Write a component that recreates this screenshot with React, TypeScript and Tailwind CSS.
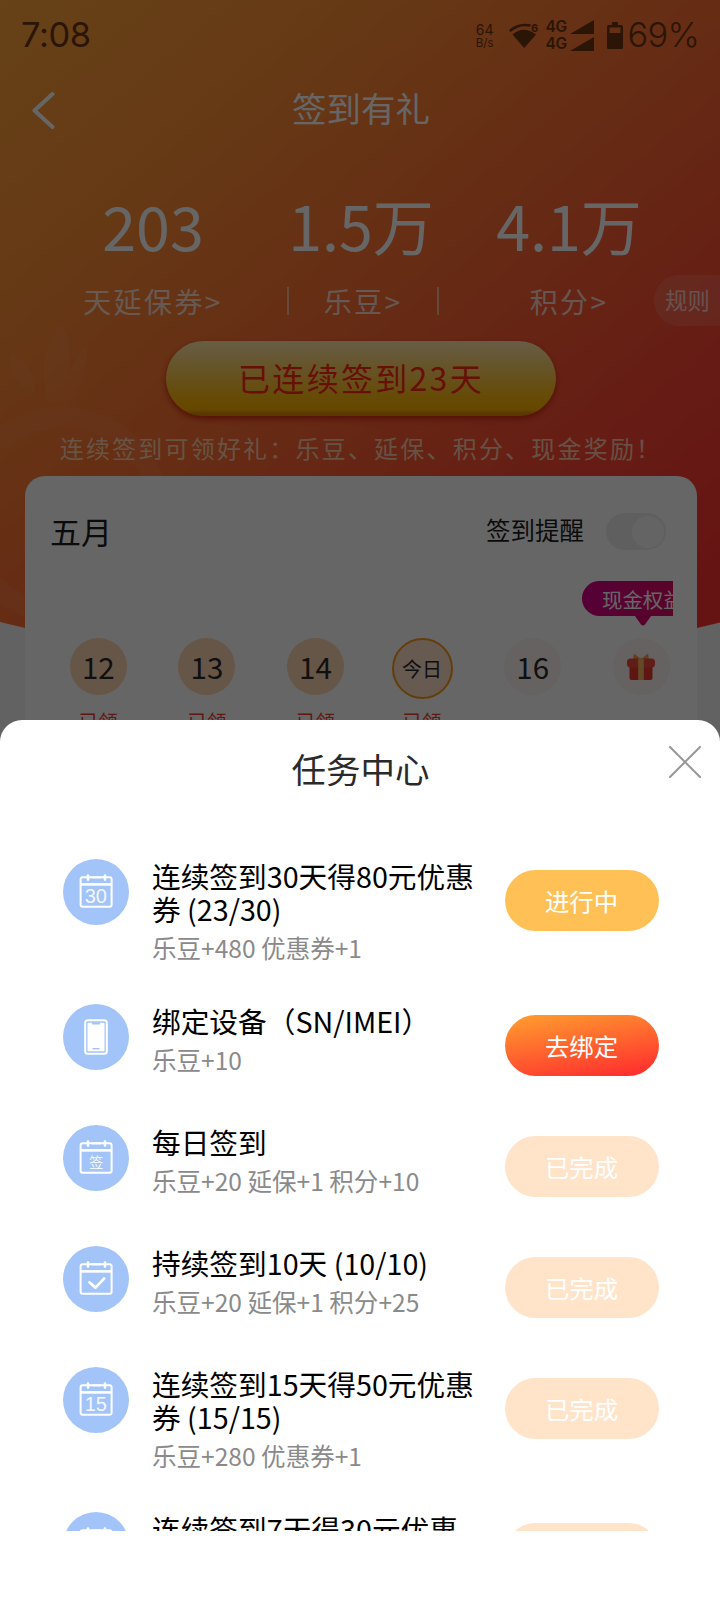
import React from "react";

type IconKind = "30" | "15" | "7" | "签" | "check" | "phone";
type Status = "doing" | "go" | "done";

interface Task {
  icon: IconKind;
  title: string;
  reward: string;
  status: Status;
  tall?: boolean;
}

const tasks: Task[] = [
  { icon: "30", title: "连续签到30天得80元优惠券 (23/30)", reward: "乐豆+480 优惠券+1", status: "doing", tall: true },
  { icon: "phone", title: "绑定设备（SN/IMEI）", reward: "乐豆+10", status: "go" },
  { icon: "签", title: "每日签到", reward: "乐豆+20 延保+1 积分+10", status: "done" },
  { icon: "check", title: "持续签到10天 (10/10)", reward: "乐豆+20 延保+1 积分+25", status: "done" },
  { icon: "15", title: "连续签到15天得50元优惠券 (15/15)", reward: "乐豆+280 优惠券+1", status: "done", tall: true },
  { icon: "7", title: "连续签到7天得30元优惠", reward: "", status: "done", tall: true },
];

const statusLabel: Record<Status, string> = { doing: "进行中", go: "去绑定", done: "已完成" };
const statusClass: Record<Status, string> = {
  doing: "bg-[#ffc156]",
  go: "bg-[linear-gradient(170deg,#ff9a2e_5%,#ff2e2e_95%)]",
  done: "bg-[#ffe4ca]",
};

function TaskIcon({ kind }: { kind: IconKind }) {
  return (
    <svg viewBox="0 0 66 66" className="block size-[66px] shrink-0" fill="none">
      <circle cx="33" cy="33" r="33" fill="#a2c4f8" />
      {kind === "phone" ? (
        <>
          <rect x="22.2" y="16.2" width="21.6" height="33.6" rx="2.5" stroke="#fff" strokeWidth="2" />
          <rect x="24.5" y="18.8" width="17" height="28.4" rx="1" fill="#fff" />
          <path d="M28.5 18.6h9l-1 2h-7z" fill="#a2c4f8" />
          <path d="M29.5 44.7h7" stroke="#a2c4f8" strokeWidth="1.4" />
        </>
      ) : (
        <>
          <rect x="17.6" y="18.2" width="31" height="29.6" rx="2" stroke="#fff" strokeWidth="2" />
          <path d="M17 25.4h32" stroke="#fff" strokeWidth="2.6" />
          <path d="M25 16.6v4M42 16.6v4" stroke="#fff" strokeWidth="2.6" strokeLinecap="round" />
          <path d="M29 18.4h9" stroke="#fff" strokeWidth="2" />
          {kind === "check" ? (
            <path d="M26.5 36.2l6 5.4 8.6-9" stroke="#fff" strokeWidth="2.8" strokeLinecap="round" strokeLinejoin="round" />
          ) : kind === "签" ? (
            <text x="33.3" y="42.8" fontSize="14.5" textAnchor="middle" fill="#fff" className="font-['Noto_Sans_CJK_SC',sans-serif] font-[350]">
              签
            </text>
          ) : (
            <text x="32.8" y="43.6" fontSize="20" textAnchor="middle" fill="#fff" fillOpacity=".9" className="font-['Liberation_Sans',sans-serif]">
              {kind}
            </text>
          )}
        </>
      )}
    </svg>
  );
}

function StatusBar() {
  return (
    <header className="flex h-[71px] items-center justify-between pr-[21px] pl-[21px] font-['Inter',sans-serif] text-[#2b1506]">
      <span className="text-[34.5px] leading-none tracking-[-0.4px]">7:08</span>
      <div className="flex items-center">
        <div className="mr-[14px] flex flex-col items-center text-[14px] leading-[15px]">
          <span>64</span>
          <span className="text-[11.5px] leading-[13px]">B/s</span>
        </div>
        <svg viewBox="0 0 32 28" className="mr-[6px] h-[28px] w-[32px]" fill="none">
          <path d="M1.8 9Q11 1 22.5 3.6" stroke="currentColor" strokeWidth="2.6" />
          <path d="M4.5 12.5Q15.5 3 28 12.5L16.2 26Z" fill="currentColor" />
          <text x="23" y="10" fontSize="11" fontWeight="700" fill="currentColor" className="font-['Inter',sans-serif]">
            6
          </text>
        </svg>
        <div className="mr-[13px] flex flex-col">
          {[0, 1].map((i) => (
            <div key={i} className="flex h-[17px] items-center gap-[2px]">
              <span className="w-[22px] text-[15.5px] leading-none font-semibold tracking-[-0.5px]">4G</span>
              <svg viewBox="0 0 24 14" className="h-[14px] w-6">
                <path d="M0 14L24 0V14Z" fill="currentColor" />
              </svg>
            </div>
          ))}
        </div>
        <svg viewBox="0 0 16 27" className="mr-[5px] h-[27px] w-4" fill="currentColor">
          <path fillRule="evenodd" d="M5 0h6v3h3.5q1.5 0 1.5 1.5v21q0 1.5-1.5 1.5h-13Q0 27 0 25.5v-21Q0 3 1.5 3H5zM2.5 5.5v5.5h11V5.5z" />
        </svg>
        <span className="text-[34.5px] leading-none font-light tracking-[-0.8px]">69%</span>
      </div>
    </header>
  );
}

function Gift() {
  return (
    <svg viewBox="0 0 30 30" className="size-[30px]">
      <path d="M15 7L8 1.500l-1 6zM15 7l7-5.500 1 6z" fill="#f5a04a" />
      <rect x="3.5" y="12" width="23" height="16" rx="2" fill="#e8382e" />
      <rect x="1" y="6.5" width="28" height="9" rx="3.5" fill="#f24a3a" />
      <rect x="12.2" y="6.5" width="5.6" height="21.5" fill="#f5b860" />
    </svg>
  );
}

const stats = [
  { value: "203", label: "天延保券>" },
  { value: "1.5万", label: "乐豆>" },
  { value: "4.1万", label: "积分>" },
];

const days = [
  { text: "12", kind: "past" },
  { text: "13", kind: "past" },
  { text: "14", kind: "past" },
  { text: "今日", kind: "today" },
  { text: "16", kind: "next" },
  { text: "", kind: "gift" },
];

function DayCell({ text, kind }: { text: string; kind: string }) {
  const tone =
    kind === "past"
      ? "size-[57px] bg-[#ffd6b4] text-[29.5px]"
      : kind === "today"
        ? "size-[61px] border-2 border-[#f79a1e] bg-[#ffe0ca] text-[20px]"
        : "size-[57px] bg-[#fcf6f2] text-[29.5px]";
  return (
    <div className={`flex w-[108.6px] shrink-0 flex-col items-center ${kind === "today" ? "pr-[4px]" : ""}`}>
      <div className="flex h-[72px] items-start">
        <div className={`flex items-center justify-center rounded-full leading-none text-[#2a2a2a] ${tone}`}>
          {kind === "gift" ? <Gift /> : text}
        </div>
      </div>
      {(kind === "past" || kind === "today") && <span className="text-[19.5px] leading-[22px] text-[#f0402f]">已领</span>}
    </div>
  );
}

function CheckInPage() {
  return (
    <main className="h-[1600px] w-[720px] overflow-hidden bg-[#f4f4f4] [grid-area:1/1]">
      <div className="grid">
        <div className="z-0 h-[700px] bg-[linear-gradient(140deg,#ffa53c_0%,#ff9136_22%,#ff6f34_47%,#ff4a34_71%,#ff3030_92%)] [clip-path:polygon(0_0,100%_0,100%_622px,697px_628px,50%_680px,25px_628px,0_622px)] [grid-area:1/1]">
          <svg viewBox="0 0 720 700" className="block h-[700px] w-[720px]" fill="none">
            <circle cx="62" cy="515" r="98" stroke="#ff9060" strokeOpacity=".22" strokeWidth="20" />
            <path d="M48 402Q34 360 62 322Q74 350 68 390Q72 355 86 346Q90 380 66 402Z" fill="#ff9a60" fillOpacity=".22" />
            <path d="M36 394Q4 380 10 352Q32 362 36 394Z" fill="#ff9a60" fillOpacity=".18" />
          </svg>
        </div>
        <div className="z-[1] flex flex-col pt-[70px] [grid-area:1/1]">
          <div className="grid h-[74px] grid-cols-[88px_1fr_88px] items-center">
            <svg viewBox="0 0 24 40" className="mt-[6px] ml-[31px] h-10 w-6" fill="none">
              <path d="M21.5 4L3.5 20.5L21.5 37" stroke="#fff" strokeWidth="4" strokeLinecap="round" strokeLinejoin="round" />
            </svg>
            <h1 className="text-center text-[34.5px] leading-[40px] text-white">签到有礼</h1>
          </div>
          <div className="mt-[48px] grid grid-cols-3 px-[49px] text-center text-white">
            {stats.map((s, i) => (
              <div key={s.label} className="flex flex-col items-center">
                <span className="pt-px text-[61px] leading-[64px]">{s.value}</span>
                <span
                  className={`mt-[30px] flex h-[28px] items-center justify-center text-[28px] leading-[28px] tracking-[2.4px] text-white/75 ${i === 1 ? "ml-[4px] w-[152px] border-x-2 border-white/50" : ""}`}
                >
                  <span>{s.label}</span>
                </span>
              </div>
            ))}
          </div>
          <div className="mt-[26px] flex h-[75px] w-[390px] items-center justify-center self-center rounded-full bg-[linear-gradient(180deg,#ffe9ae_0%,#ffcc50_45%,#ffb806_80%,#ffb000_92%,#e09000_96%,#e09000_100%)] text-[32px] tracking-[2.3px] text-[#ff2a12] shadow-[0_3px_6px_#d02a10]">
            <span className="-mt-[4px] leading-none">已连续签到23天</span>
          </div>
          <p className="mt-[18px] text-center text-[24px] leading-[28px] tracking-[2.2px] whitespace-nowrap text-[#ffe2c0]/85">
            连续签到可领好礼：乐豆、延保、积分、现金奖励！
          </p>
          <section className="mx-[25px] mt-[14px] h-[400px] w-[672px] rounded-[20px] bg-white">
            <div className="flex h-[111px] items-center justify-between pr-[31px] pl-[25px] text-[#1c1c1c]">
              <h2 className="-mt-[3px] text-[31px] leading-none">五月</h2>
              <div className="flex items-center gap-[22px]">
                <span className="-mt-[2px] text-[24.5px] leading-none">签到提醒</span>
                <span className="flex h-[37px] w-[60px] items-center justify-end rounded-full bg-[#eeeeee] p-[2px]">
                  <span className="size-[32px] rounded-full bg-[#fbfbfb]" />
                </span>
              </div>
            </div>
            <div className="-mt-[6px] mr-[24px] ml-[19px] overflow-hidden">
              <div className="ml-auto h-[57px] w-[91px]">
                <div className="flex h-[35px] w-[118px] items-center rounded-full bg-[linear-gradient(90deg,#d6008c,#e0105a)] pt-px pl-[20px] text-[20.4px] leading-none whitespace-nowrap text-white">
                  现金权益
                </div>
                <svg viewBox="0 0 16 10" className="ml-[53px] block h-[10px] w-4">
                  <path d="M0 0H16L10 8.5Q8 10.5 6 8.5Z" fill="#d8006e" />
                </svg>
              </div>
              <div className="flex">
                {days.map((d) => (
                  <DayCell key={d.kind + d.text} {...d} />
                ))}
              </div>
            </div>
          </section>
        </div>
        <div className="z-[2] mt-[275px] flex h-[51px] w-[68px] items-center self-start justify-self-end rounded-l-full bg-white/12 pb-[2px] pl-[11px] text-[22.4px] leading-none text-white/70 [grid-area:1/1]">
          规则
        </div>
      </div>
    </main>
  );
}

function TaskRow({ task }: { task: Task }) {
  return (
    <li className={`flex shrink-0 items-start ${task.tall ? "h-[145px]" : "h-[121px]"}`}>
      <TaskIcon kind={task.icon} />
      <div className="ml-[23px] w-[330px]">
        <h3 className="w-[325px] pt-px text-[28.7px] leading-[32.8px] text-black">{task.title}</h3>
        <p className="mt-[5px] text-[24.55px] leading-[33px] whitespace-nowrap text-[#8a8a8a]">{task.reward}</p>
      </div>
      <button
        className={`mt-[10.5px] ml-[22.5px] flex h-[61.5px] w-[154px] items-center justify-center rounded-full pt-px text-[24.4px] leading-none text-white ${statusClass[task.status]}`}
      >
        {statusLabel[task.status]}
      </button>
    </li>
  );
}

export default function App() {
  return (
    <div className="grid h-[1600px] w-[720px] overflow-hidden font-['Noto_Sans_CJK_SC',sans-serif] font-normal">
      <CheckInPage />
      <div className="z-10 bg-black/60 [grid-area:1/1]" />
      <div className="z-20 self-start [grid-area:1/1]">
        <StatusBar />
      </div>
      <section className="z-20 flex h-[880px] flex-col self-end rounded-t-[22px] bg-white [grid-area:1/1]">
        <div className="grid h-[139px] grid-cols-[80px_1fr_80px] items-start">
          <h2 className="col-start-2 mt-[28px] pl-px text-center text-[34.5px] leading-[40px] text-[#2a2a2a]">任务中心</h2>
          <svg viewBox="0 0 32 32" className="mt-[26px] ml-[29px] size-8" fill="none">
            <path d="M1 1L31 31M31 1L1 31" stroke="#979797" strokeWidth="2" strokeLinecap="round" />
          </svg>
        </div>
        <ul className="flex h-[672px] flex-col overflow-hidden pl-[63px]">
          {tasks.map((t) => (
            <TaskRow key={t.title} task={t} />
          ))}
        </ul>
      </section>
    </div>
  );
}
